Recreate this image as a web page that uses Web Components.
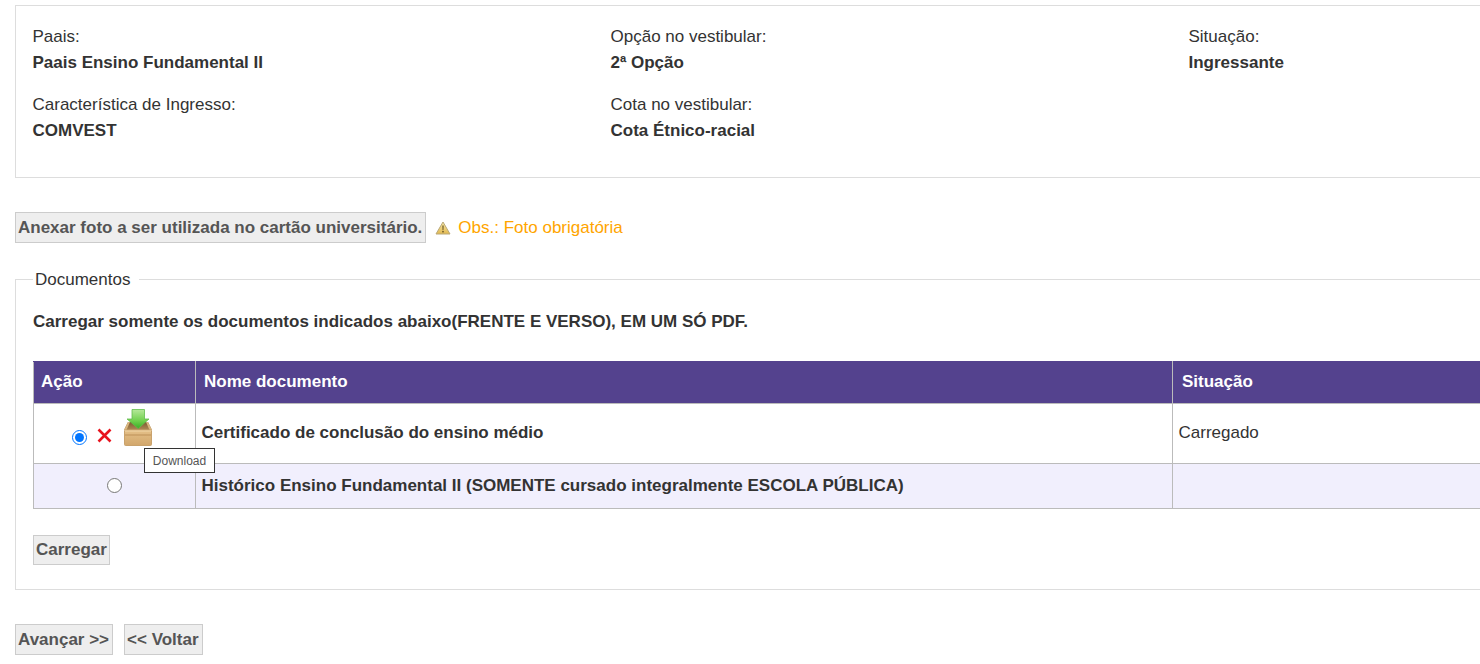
<!DOCTYPE html>
<html lang="pt-BR"><head><meta charset="utf-8"><title>Documentos</title>
<style>
html,body{margin:0;padding:0;height:664px;width:1480px;overflow:hidden;background:#fff}
body{font:17px/20px "Liberation Sans",Arial,sans-serif;color:#333}
</style></head><body>
<x-page>
  <x-info-panel>
    <x-field label="Paais:" value="Paais Ensino Fundamental II"></x-field>
    <x-field label="Opção no vestibular:" value="2ª Opção"></x-field>
    <x-field label="Situação:" value="Ingressante"></x-field>
    <x-field label="Característica de Ingresso:" value="COMVEST"></x-field>
    <x-field label="Cota no vestibular:" value="Cota Étnico-racial"></x-field>
  </x-info-panel>
  <x-photo-row></x-photo-row>
  <x-docs-panel legend="Documentos">
    <x-docs-table></x-docs-table>
  </x-docs-panel>
  <x-nav-row></x-nav-row>
</x-page>
<script>
function def(name, html){
  customElements.define(name, class extends HTMLElement{
    connectedCallback(){
      if(this.shadowRoot) return;
      const r=this.attachShadow({mode:'open'});
      r.innerHTML = typeof html==='function'?html(this):html;
    }
  });
}
def('x-page',`<style>:host{display:block;box-sizing:border-box;width:1560px;padding:5px 0 0 15px}</style><slot></slot>`);
def('x-info-panel',`<style>:host{display:grid;grid-template-columns:578px 578px 340px;box-sizing:border-box;width:1530px;height:173px;border:1px solid #ddd;padding:18px 0 0 16.5px;grid-auto-rows:68px;align-content:start}</style><slot></slot>`);
def('x-field',h=>`<style>:host{display:block}
.l{display:block;height:26px;line-height:26px}
.v{display:block;height:26px;line-height:26px;font-weight:700}</style>
<span class="l">${h.getAttribute('label')}</span><span class="v">${h.getAttribute('value')}</span>`);
def('x-btn',`<style>:host{display:inline-block;box-sizing:border-box;background:#eee;border:1px solid #ccc;color:#555;font-weight:700;font-size:17px;line-height:29px;height:31px;padding:0 2px;white-space:nowrap}</style><slot></slot>`);
def('x-warn-icon',`<style>:host{display:inline-block;width:16px;height:14px}svg{display:block}</style>
<svg width="16" height="14" viewBox="0 0 16 14"><defs><linearGradient id="g" x1="0" y1="0" x2="0" y2="1"><stop offset="0" stop-color="#f7e9a8"/><stop offset="1" stop-color="#e2b84f"/></linearGradient></defs>
<path d="M8 1 15 13H1Z" fill="url(#g)" stroke="#b9a876" stroke-width="1" stroke-linejoin="round"/><path d="M7.400 4.500h1.200l-.2 4.800h-.8Z" fill="#5a4a20"/><rect x="7.300" y="10" width="1.400" height="1.400" fill="#5a4a20"/></svg>`);
def('x-photo-row',`<style>:host{display:flex;align-items:center;margin-top:34px;height:31px;color:orange}
x-btn{padding-right:3px}
x-warn-icon{margin:0 7px 0 9px}</style>
<x-btn>Anexar foto a ser utilizada no cartão universitário.</x-btn><x-warn-icon></x-warn-icon><span>Obs.: Foto obrigatória</span>`);
def('x-docs-panel',h=>`<style>:host{display:block;margin-top:26px}
fieldset{box-sizing:border-box;width:1530px;height:321px;margin:0;border:1px solid #ddd;padding:0 0 0 17px;min-inline-size:0}
legend{padding:0 9px 0 2px;margin-left:0;line-height:22px;height:20px;font-size:17px}
p{margin:23px 0 0;font-weight:700;line-height:20px}
x-btn{height:30px;line-height:28px;margin-top:26px}</style>
<fieldset><legend>${h.getAttribute('legend')}</legend>
<p>Carregar somente os documentos indicados abaixo(FRENTE E VERSO), EM UM SÓ PDF.</p>
<slot></slot><x-btn>Carregar</x-btn></fieldset>`);
def('x-download-icon',`<style>:host{display:inline-block;width:28px;height:37px;position:relative}svg{display:block}
.tip{position:absolute;left:20px;top:39px;box-sizing:border-box;width:71px;height:25px;background:#fff;border:1px solid #333;font-size:12px;line-height:25px;text-align:center;color:#555}</style>
<svg width="28" height="37" viewBox="0 0 28 37"><defs>
<linearGradient id="a" x1="0" y1="0" x2="0" y2="1"><stop offset="0" stop-color="#b6e89a"/><stop offset=".6" stop-color="#6fd04c"/><stop offset="1" stop-color="#39ad24"/></linearGradient>
<linearGradient id="b" x1="0" y1="0" x2="0" y2="1"><stop offset="0" stop-color="#e4c088"/><stop offset="1" stop-color="#d2a76c"/></linearGradient>
<linearGradient id="c" x1="0" y1="0" x2="0" y2="1"><stop offset="0" stop-color="#7a5a30"/><stop offset="1" stop-color="#b08a56"/></linearGradient></defs>
<path d="M4 13 0 21h28l-4-8Z" fill="url(#c)"/>
<path d="M4 13 0 21h2.500L6 13ZM24 13l4 8h-2.500L22 13Z" fill="#d9b57f"/>
<rect x=".5" y="21" width="27" height="15.500" rx="1" fill="url(#b)" stroke="#c9a26c"/>
<rect x="1" y="25.500" width="26" height="1" fill="#bd9258"/><rect x="1" y="21.500" width="26" height="1" fill="#efd6a8"/>
<path d="M8 .5h12.500v9.500H25L14.200 19.500 3 10h5Z" fill="url(#a)" stroke="#62bd4c" stroke-width=".8"/></svg>
<span class="tip">Download</span>`);
def('x-docs-table',`<style>:host{display:block;margin-top:29px;font-size:17px}
table{border-collapse:collapse;table-layout:fixed;width:1520px}
th,td{border:1px solid #bbb;padding:0}
th{background:#54428e;color:#fff;height:40px;text-align:left;padding:0 8px 1px;font-weight:700;border-top-color:#54428e}
th:first-child{padding-left:7px}
th:last-child{padding-left:9px}
td{color:#333}
tr.r1 td{height:59px}tr.r2 td{height:44px;background:#f1effd}
td.n{font-weight:700;padding:0 6px 0 5.5px}td.s{padding:0 6px 0 5.5px}
tr.r1 td.n,tr.r1 td.s{padding-bottom:2px;height:57px}
.acts{display:flex;align-items:flex-start;padding-left:38px;height:59px;box-sizing:border-box}
input{width:15px;height:15px;margin:0;accent-color:#0075ff}
.x{margin:24px 12px 0 10px;display:block}
x-download-icon{margin-top:5px}
.one{display:flex;justify-content:center;padding:0 1px 2px 0}
</style>
<table><colgroup><col style="width:162px"><col style="width:977px"><col></colgroup>
<tr><th>Ação</th><th>Nome documento</th><th>Situação</th></tr>
<tr class="r1"><td><div class="acts"><input type="radio" name="d" checked style="margin-top:26px">
<svg class="x" width="15" height="15" viewBox="0 0 15 15"><path d="M1.500 1.500 13.500 13.500M13.500 1.500 1.500 13.500" stroke="#e8141e" stroke-width="2.600"/></svg>
<x-download-icon></x-download-icon></div></td><td class="n">Certificado de conclusão do ensino médio</td><td class="s">Carregado</td></tr>
<tr class="r2"><td><div class="one"><input type="radio" name="d"></div></td><td class="n">Histórico Ensino Fundamental II (SOMENTE cursado integralmente ESCOLA PÚBLICA)</td><td></td></tr>
</table>`);
def('x-nav-row',`<style>:host{display:flex;gap:11px;margin-top:34px}x-btn{padding-right:3px}</style><x-btn>Avançar &gt;&gt;</x-btn><x-btn>&lt;&lt; Voltar</x-btn>`);
</script>
</body></html>
